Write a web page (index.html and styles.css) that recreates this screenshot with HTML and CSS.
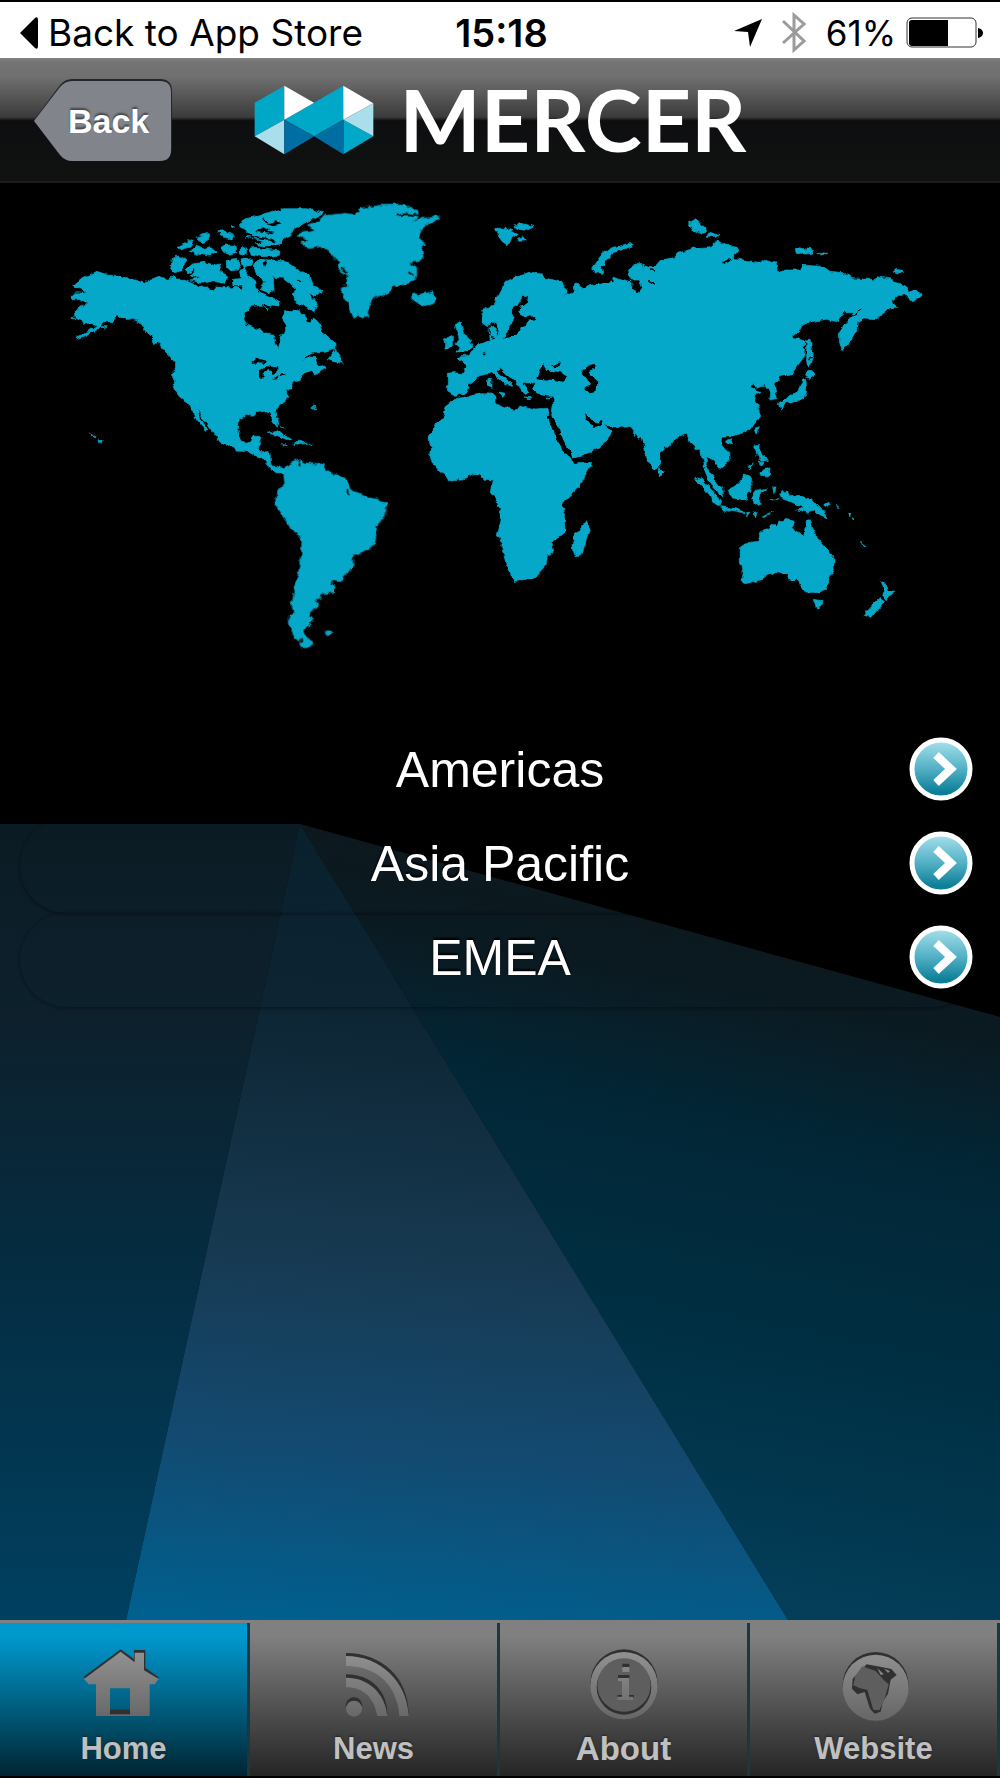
FILE: index.html
```html
<!DOCTYPE html>
<html lang="en">
<head>
<meta charset="utf-8">
<meta name="viewport" content="width=device-width, initial-scale=1">
<title>Mercer</title>
<link rel="stylesheet" href="styles.css">
</head>
<body>
<div class="status">
  <a class="status-back" href="#">
    <svg width="18" height="32" viewBox="0 0 18 32" aria-hidden="true"><path d="M0 16 15 1Q18-1 18 3V29Q18 33 15 31Z"/></svg>
    <span>Back to App Store</span>
  </a>
  <time class="status-time">15:18</time>
  <div class="status-info">
    <svg width="28" height="28" viewBox="0 0 28 28" aria-hidden="true"><path d="M28 0 16 28 14 13 0 12Z"/></svg>
    <svg class="bluetooth" width="24" height="44" viewBox="0 0 24 44" aria-hidden="true"><path d="M1 10 22 30 12 39V4L22 13 1 32"/></svg>
    <span>61%</span>
    <svg class="battery" width="77" height="32" viewBox="0 0 77 32" aria-hidden="true"><rect class="battery-case" x="1" y="1" width="69" height="29" rx="5"/><path d="M6 3H42V29H6Q3 29 3 26V6Q3 3 6 3ZM72 11Q77 12 77 16T72 21Z"/></svg>
  </div>
</div>

<header class="header">
  <button class="back" type="button">
    <svg class="back-shape" viewBox="0 0 138 82" preserveAspectRatio="none" aria-hidden="true">
      <path class="back-shadow" d="M0 41 26 6Q31 0 38 0H126Q138 0 138 12V68Q138 80 126 80H38Q31 80 26 75Z"/>
      <path class="back-face" d="M0 42 26 8Q31 2 38 2H126Q137 2 137 13V71Q137 82 126 82H38Q31 82 26 76Z"/>
    </svg>
    <span>Back</span>
  </button>
  <div class="brand">
    <svg width="120" height="70" viewBox="760 257 360 210" aria-hidden="true">
      <path fill="#00a8c8" d="M762 310 851 259V361L762 411ZM851 361 1028 259V361L940 411ZM1028 361 1118 411 1028 465Z"/>
      <path fill="#fff" d="M851 259 940 310 851 361ZM1028 259 1118 312 1028 361Z"/>
      <path fill="#a8dfeb" d="M762 411 851 361V465ZM1028 361 1118 312V411Z"/>
      <path fill="#006da3" d="M851 361 940 411 851 465ZM940 411 1028 361V465Z"/>
    </svg>
    <span class="wordmark">MERCER</span>
  </div>
</header>

<main class="main">
  <svg class="beams" viewBox="0 183 1000 1437" preserveAspectRatio="none" aria-hidden="true">
    <defs>
      <linearGradient id="beam-left" x1="0" y1="824" x2="0" y2="1620" gradientUnits="userSpaceOnUse">
        <stop offset="0" stop-color="#0b1b24"/><stop offset=".25" stop-color="#0d212d"/><stop offset=".55" stop-color="#052c41"/><stop offset="1" stop-color="#004060"/>
      </linearGradient>
      <linearGradient id="beam-mid" x1="440" y1="824" x2="380" y2="1630" gradientUnits="userSpaceOnUse">
        <stop offset="0" stop-color="#09202d"/><stop offset=".24" stop-color="#0d2533"/><stop offset=".55" stop-color="#173a52"/><stop offset=".78" stop-color="#134a71"/><stop offset="1" stop-color="#00608f"/>
      </linearGradient>
      <linearGradient id="beam-right" x1="700" y1="824" x2="550" y2="1600" gradientUnits="userSpaceOnUse">
        <stop offset="0" stop-color="#0d171c"/><stop offset=".2" stop-color="#0b1a21"/><stop offset=".36" stop-color="#022636"/><stop offset=".65" stop-color="#003044"/><stop offset="1" stop-color="#04405c"/>
      </linearGradient>
    </defs>
    <path fill="url(#beam-left)" d="M0 824H300L126 1620H0Z"/>
    <path fill="url(#beam-right)" d="M300 824 1000 1017V1620H788Z"/>
    <path fill="url(#beam-mid)" d="M300 824 788 1620H126Z"/>
  </svg>

  <svg class="map" viewBox="0 183 1000 542" role="img" aria-label="World map">
    <defs>
      <filter id="coast" x="0" y="183" width="1000" height="542" filterUnits="userSpaceOnUse" color-interpolation-filters="sRGB">
        <feTurbulence type="fractalNoise" baseFrequency=".14" numOctaves="2" seed="4" result="noise"/>
        <feDisplacementMap in="SourceGraphic" in2="noise" scale="6" xChannelSelector="R" yChannelSelector="G"/>
      </filter>
    </defs>
    <g filter="url(#coast)">
    <!-- North America -->
    <g transform="translate(50 190) scale(.3333)">
      <path d="M68 285 95 262 120 256 140 244 175 255 205 257 235 265 260 268 287 277 300 268 330 259 352 268 372 260 378 267 405 268 432 280 440 292 475 291 487 300 495 291 545 293 565 290 575 299 578 285 552 285 550 268 575 265 568 240 582 236 600 262 614 273 616 292 630 310 652 318 690 335 686 348 665 345 655 360 640 345 600 350 588 365 583 382 592 405 620 417 645 432 672 436 674 462 688 476 692 460 690 438 708 425 706 408 697 395 700 362 725 358 760 372 770 396 785 402 790 384 799 390 820 428 858 460 858 478 830 486 790 490 765 500 755 515 785 498 798 500 800 520 815 528 825 525 828 532 795 552 785 545 758 552 750 572 730 576 722 596 712 600 716 622 700 636 682 655 679 668 686 700 682 712 668 694 664 670 640 664 618 668 610 676 590 673 565 688 562 722 572 748 588 760 605 755 613 738 636 740 632 758 628 784 660 786 662 822 690 836 712 828 712 850 684 848 652 826 632 802 612 796 595 782 560 780 510 756 500 742 478 712 450 668 440 658 455 690 475 722 466 724 440 690 420 645 392 626 376 602 370 580 374 520 345 484 330 464 290 425 275 400 250 388 225 388 205 375 190 395 170 392 150 412 110 436 82 447 80 440 112 428 140 405 122 400 102 402 96 390 78 382 76 362 92 350 110 346 108 336 88 328 68 330 63 320 75 308 108 310 95 298 75 292Z"/>
      <path d="M368 200 388 198 408 208 395 240 380 248 362 238ZM382 172 400 160 430 152 420 168 392 177ZM440 140 475 130 476 148 460 158 440 150ZM418 185 440 168 460 176 480 170 500 188 480 198 440 192ZM408 238 428 222 470 216 490 226 512 222 508 240 534 262 518 280 490 272 455 280 420 270 452 262 410 252ZM502 125 515 122 550 138 546 148 520 142ZM545 106 554 112 546 116ZM512 172 530 165 558 166 560 188 535 193 520 186ZM528 215 556 208 570 222 562 240 545 242 530 228ZM570 175 590 178 588 194 572 190ZM568 105 580 88 605 82 640 72 700 56 770 56 822 68 815 76 770 97 728 122 720 140 700 150 692 166 640 168 615 162 642 152 590 142 612 130 585 122ZM598 178 620 175 690 182 688 196 640 200 600 192ZM610 222 628 208 705 212 745 242 778 258 790 290 822 302 800 318 780 312 802 340 792 365 770 350 735 334 730 312 738 296 718 278 702 265 670 262 672 300 655 308 630 298 645 275 618 250ZM570 210 608 206 606 225 580 235ZM640 320 665 330 680 342 640 345ZM832 510 855 480 870 500 880 520ZM652 730 680 724 725 748 720 753 680 736ZM728 760 745 750 770 760 738 766ZM698 760 712 764 700 768ZM776 760 790 764ZM693 710 706 714ZM790 648 798 652 790 655ZM145 745 154 752 150 760ZM118 732 138 740 136 744ZM345 482 365 486 382 512 375 512ZM305 430 312 450 325 455 314 464ZM155 410 172 410 164 418ZM66 382 78 388 68 390Z"/>
      <g class="water">
        <path d="M604 522 622 506 650 516 648 522 625 520ZM630 566 630 540 645 528 682 532 682 545 668 552 658 536 642 545 640 566ZM662 566 690 556 685 564ZM690 550 710 548 692 556ZM796 502 835 496 826 520 802 526ZM675 292 700 286 712 310 698 322 674 312ZM700 288 718 278 728 292 712 298ZM740 268 760 276 744 275ZM780 308 800 322 786 326ZM638 218 650 210 642 235ZM650 100 675 94 698 100 670 106ZM615 126 640 112 660 120 650 130Z"/>
        <path class="strait" d="M600 140 650 145 678 158M640 86 652 100M640 125 668 130M470 222 480 210 520 205M400 262 435 242M645 345 660 352 680 360"/>
      </g>
    </g>
    <!-- Greenland and Iceland -->
    <g transform="translate(270 190) scale(.3333)">
      <path d="M78 138 100 125 132 120 115 105 150 92 165 76 230 70 252 74 280 54 330 46 400 45 445 62 438 80 430 96 452 82 505 78 510 86 480 98 455 120 445 140 468 160 455 172 460 205 445 215 418 216 440 232 440 262 408 282 368 290 345 312 310 324 295 350 292 380 275 384 265 374 252 382 235 345 215 310 218 290 235 288 234 256 205 240 205 215 180 182 150 170 118 175 92 158 120 150Z"/>
      <path d="M425 310 442 308 448 320 465 310 485 306 502 324 490 338 460 348 430 334Z"/>
      <path class="strait water" d="M380 77 412 72 440 76M212 234 232 248M415 246 432 258"/>
    </g>
    <!-- South America -->
    <g transform="translate(240 430) scale(.3333)">
      <path d="M92 116 110 108 130 116 150 100 182 88 195 98 230 104 252 100 255 115 278 132 305 138 322 154 330 178 372 198 406 204 438 222 438 246 410 285 408 320 390 356 342 375 340 405 302 456 270 450 285 470 280 486 244 492 242 508 222 512 236 520 215 545 206 556 218 572 196 594 192 608 200 630 222 642 208 650 182 650 178 632 160 616 148 580 148 558 165 550 156 528 163 480 175 430 184 380 186 322 150 298 138 272 106 220 110 188 134 160 130 125 112 128Z"/>
      <path d="M252 610 260 605 274 608 264 618Z"/>
      <path class="strait water" d="M180 90 178 112M184 628 182 638M322 180 324 192"/>
    </g>
    <!-- Africa -->
    <g transform="translate(240 430) scale(.3333)">
      <path d="M645 -93 670 -98 700 -108 765 -114 765 -82 800 -68 825 -54 840 -72 885 -60 925 -62 926 -40 950 5 972 48 998 100 1055 94 1052 110 1018 170 975 212 966 230 976 262 978 302 936 335 942 365 922 382 918 405 882 445 850 452 822 454 812 430 798 395 788 345 772 315 784 268 772 215 750 190 757 150 730 148 718 134 700 134 680 145 630 150 600 126 568 86 572 52 566 18 580 -8 612 -42 618 -72Z"/>
      <path d="M1040 272 1048 296 1034 350 1024 378 1002 380 996 350 1004 310 1022 300Z"/>
    </g>
    <!-- Europe and the Middle East -->
    <g transform="translate(400 190) scale(.3333)">
      <path d="M142 550 155 548 192 550 200 528 192 515 172 502 205 498 240 462 268 452 264 420 280 400 262 410 248 400 242 362 280 345 300 310 318 275 345 262 390 246 425 252 440 265 480 276 502 296 500 315 480 322 492 338 470 335 455 310 490 320 525 305 522 282 540 284 545 298 560 292 590 280 630 278 640 262 690 278 712 308 728 290 718 270 690 270 686 240 702 222 728 224 730 262 740 275 740 225 760 236 780 212 840 208V735L780 790 776 822 762 842 740 790 727 740 715 745 685 708 640 710 612 702 635 728 620 750 595 775 550 795 518 808 512 785 480 735 455 680 462 620 440 618 420 614 400 596 404 575 400 578 378 582 392 600 380 615 366 605 345 572 318 552 300 535 292 545 325 570 340 590 325 585 310 580 275 548 255 558 232 560 210 582 205 600 185 614 165 616 142 602Z"/>
      <path d="M282 115 320 115 358 130 338 142 326 166 310 155ZM338 108 375 102 402 110 375 124ZM355 145 372 140 380 152 360 154ZM575 238 600 200 630 175 690 160 700 168 640 188 605 230 608 250 590 248ZM165 405 175 398 188 410 195 435 220 470 200 485 165 490 182 475 168 462 180 445ZM135 448 160 438 160 465 138 475ZM296 606 318 610 308 622ZM375 624 396 626 384 629ZM436 624 450 626 440 630ZM778 832 792 848 782 858 774 846Z"/>
      <g class="water">
        <path d="M332 370 340 350 355 345 368 320 385 320 380 335 362 348 358 372 372 382 408 378 412 386 380 394 378 408 362 412 355 432 330 442 308 446 325 430 330 400 345 388ZM278 398 290 398 298 432 285 445 270 440 265 420ZM408 565 418 540 432 522 445 542 478 546 502 564 490 575 460 570 435 568ZM452 530 480 520 475 532ZM545 540 565 525 585 522 582 536 568 545 580 562 592 572 590 605 570 610 556 595 570 582ZM555 670 570 680 585 698 610 692 600 710 580 714 560 690ZM368 582 395 578 400 598 420 616 395 618 385 605ZM230 565 265 552 272 600 292 602 300 612 205 608 212 590ZM440 674 454 678 480 724 492 756 512 784 518 810 488 786 470 744Z"/>
        <path class="strait" d="M248 490H256M630 262 640 275M750 230 742 250"/>
      </g>
      <path d="M270 415 285 408 296 436 286 440 270 436Z"/>
      <path d="M266 565 276 566 276 595 266 590Z"/>
    </g>
    <!-- Asia -->
    <g transform="translate(650 190) scale(.3333)">
      <path d="M-20 222 0 230 25 226 40 234 30 215 75 205 78 192 130 174 180 170 200 150 225 166 262 168 270 182 245 205 300 212 330 218 345 208 378 216 382 245 400 240 450 240 460 225 520 230 540 244 598 250 605 266 660 268 672 276 680 260 720 266 775 292 778 304 795 298 814 312 790 336 770 318 745 316 725 332 738 354 715 358 680 386 640 384 622 395 620 425 600 455 576 482 568 455 568 425 590 395 612 368 580 368 565 396 530 388 478 396 425 438 445 448 465 452 462 500 425 552 392 560 372 585 382 625 360 630 362 608 345 585 320 595 310 580 300 595 330 604 310 620 328 660 326 682 296 722 240 740 218 742 216 760 236 785 238 812 210 836 190 810 170 800 168 830 195 868 215 895 218 920 180 880 160 830 152 778 136 782 108 730 80 740 30 788 28 822 12 842 -10 800 -23 740 -40 700Z"/>
      <path d="M116 100 138 86 152 100 170 118 155 132 130 120ZM168 142 180 124 210 134 200 142ZM436 176 445 172 492 182 490 190 440 194ZM500 186 534 190 515 195ZM732 246 742 238 760 242 745 252ZM470 450 480 448 490 498 478 528 470 520ZM460 558 476 540 498 550 478 566ZM458 570 468 568 470 605 460 630 430 632 400 642 392 660 384 638 415 622 445 600ZM314 715 328 710 322 734ZM230 750 248 746 244 764 232 762ZM26 830 42 848 36 858 26 850ZM314 764 330 764 330 790 345 800 355 818 335 812 320 795ZM330 845 360 830 358 858 328 856Z"/>
      <path class="strait water" d="M218 220 245 205M630 355 620 372 600 380M0 275 15 285M0 240 15 243M485 500 476 510"/>
    </g>
    <!-- South-east Asia and Oceania -->
    <g transform="translate(640 430) scale(.3333)">
      <path d="M165 142 182 146 215 180 245 212 240 228 222 218 195 180ZM190 108 202 122 222 140 232 170 215 164ZM242 230 275 234 312 244 305 250 250 240ZM316 245 330 248 320 254ZM338 250 352 248 345 260ZM370 258 395 245 378 262ZM265 176 290 165 318 132 335 145 330 180 316 212 280 204 268 192ZM342 182 378 174 358 188 360 220 346 226 338 208ZM398 170 408 172 402 192ZM390 208 420 206 400 210ZM422 192 440 186 448 200 478 196 520 212 542 232 562 264 535 252 520 240 500 250 470 242 488 232 450 214 430 208ZM548 228 572 216 575 222 556 232ZM590 222 600 232 592 232ZM626 250 636 248 632 260ZM640 260 648 264 642 266ZM658 336 680 352 672 350ZM325 112 340 98 330 118ZM355 90 372 98 365 108Z"/>
      <path d="M298 354 325 338 352 334 362 310 392 288 408 292 415 275 438 268 464 274 455 294 492 316 500 268 508 266 518 294 530 322 560 355 582 382 582 415 568 445 555 478 535 488 495 486 468 445 456 456 442 435 412 428 382 436 362 450 322 460 306 452 310 430 298 395Z"/>
      <path d="M520 508 546 512 545 525 530 534ZM720 452 735 462 745 480 762 484 740 514 728 500 734 480ZM718 506 732 516 712 540 695 562 675 556 680 545Z"/>
    </g>
    </g>
  </svg>

  <nav aria-label="Regions">
    <ul class="regions">
      <li><a class="region" href="#"><span class="region-name">Americas</span><svg class="go" viewBox="0 0 64 64" aria-hidden="true"><defs><linearGradient id="go-fill" x1="0" y1="0" x2="0" y2="1"><stop offset=".05" stop-color="#9fdde9"/><stop offset=".5" stop-color="#52b0c5"/><stop offset=".9" stop-color="#0b7f97"/></linearGradient></defs><circle cx="32" cy="32" r="29"/><path d="M27 18 42 32 27 46"/></svg></a></li>
      <li><a class="region" href="#"><span class="region-name">Asia Pacific</span><svg class="go" viewBox="0 0 64 64" aria-hidden="true"><circle cx="32" cy="32" r="29"/><path d="M27 18 42 32 27 46"/></svg></a></li>
      <li><a class="region" href="#"><span class="region-name">EMEA</span><svg class="go" viewBox="0 0 64 64" aria-hidden="true"><circle cx="32" cy="32" r="29"/><path d="M27 18 42 32 27 46"/></svg></a></li>
    </ul>
  </nav>
</main>

<nav class="tabs" aria-label="Sections">
  <a class="tab tab-active" href="#" aria-current="page">
    <svg class="icon" viewBox="250 140 240 228" aria-hidden="true">
      <defs><linearGradient id="metal" x1="0" y1="150" x2="0" y2="350" gradientUnits="userSpaceOnUse"><stop offset="0" stop-color="#929292"/><stop offset="1" stop-color="#686868"/></linearGradient></defs>
      <path class="edge" d="M248 230 360 147 400 176V149H434V202L476 232 460 240 360 165 262 240Z"/>
      <path class="edge" d="M328 328H388V346H328Z"/>
      <path class="metal" fill-rule="evenodd" d="M250 236 360 154 402 186V157H430V210L474 236 462 252H447V347H388V264H328V347H286V252H264Z"/>
      <path class="metal" d="M328 342H388V347H328Z"/>
    </svg>
    <span class="tab-label">Home</span>
  </a>
  <a class="tab" href="#">
    <svg class="icon" viewBox="1000 140 240 228" aria-hidden="true">
      <g class="edge"><path d="M1036 158C1140 158 1224 230 1224 340H1196C1190 250 1130 190 1036 190Z"/><path d="M1036 222C1110 222 1160 270 1160 340H1130C1120 285 1090 250 1036 250Z"/><circle cx="1060" cy="316" r="25"/></g>
      <g class="metal"><path d="M1036 167C1140 167 1220 245 1224 347H1196C1190 255 1130 197 1036 197Z"/><path d="M1036 232C1105 232 1154 280 1160 347H1130C1120 292 1090 262 1036 260Z"/><circle cx="1060" cy="325" r="24"/></g>
    </svg>
    <span class="tab-label">News</span>
  </a>
  <a class="tab" href="#">
    <svg class="icon" viewBox="250 140 240 228" aria-hidden="true">
      <circle class="edge" cx="370" cy="248" r="101"/>
      <circle class="metal" cx="370" cy="256" r="101"/>
      <circle class="edge" cx="370" cy="261" r="82"/>
      <circle class="hollow" cx="370" cy="254" r="80"/>
      <path class="edge" d="M365 190H386V202H365ZM352 224H386V234H352ZM350 284H400V293H350Z"/>
      <path class="metal" d="M365 200H386V215H365ZM352 233H385V289H398V299H350V289H364V243H352Z"/>
    </svg>
    <span class="tab-label tab-label-large">About</span>
  </a>
  <a class="tab" href="#">
    <svg class="icon" viewBox="1000 140 240 228" aria-hidden="true">
      <circle class="edge" cx="1125" cy="254" r="99"/>
      <circle class="metal" cx="1125" cy="262" r="99"/>
      <path class="edge" d="M1098 192 1130 198 1172 206 1188 224 1170 238 1162 280 1146 306 1140 334 1122 340 1108 325 1092 275 1070 282 1054 265 1056 235Z"/>
      <path class="hollow" d="M1085 198 1125 212 1150 240 1164 252 1152 295 1136 330 1118 328 1100 268 1078 264 1058 255 1064 226Z"/>
      <path class="metal" d="M1130 204 1150 222 1140 224ZM1150 205 1168 212 1162 218Z"/>
    </svg>
    <span class="tab-label">Website</span>
  </a>
</nav>
</body>
</html>
```
FILE: styles.css
```css
* { box-sizing: border-box; }

body {
  margin: 0;
  min-height: 100vh;
  display: flex;
  flex-direction: column;
  background: #000;
  color: #fff;
  font-family: "Liberation Sans", Arial, sans-serif;
}

a { color: inherit; text-decoration: none; }
svg { display: block; flex: none; }

.status {
  display: grid;
  grid-template-columns: 1fr auto 1fr;
  align-items: center;
  height: 58px;
  padding: 5px 17px 0 20px;
  border-top: 2px solid #000;
  background: #fff;
  color: #000;
  font: 37px/50px Inter, sans-serif;
  white-space: nowrap;
}

.status-back { display: flex; align-items: center; gap: 10px; }
.status-time { font-size: 38px; font-weight: 600; }
.status-info { display: flex; align-items: center; justify-content: flex-end; gap: 10px; font-size: 35px; }

.bluetooth {
  fill: none;
  stroke: #9b9b9b;
  stroke-width: 3;
  margin: 0 10px;
}

.battery-case { fill: none; stroke: #333; }

.header {
  display: grid;
  grid-template-columns: 1fr auto 1fr;
  align-items: center;
  height: 125px;
  padding: 0 34px;
  border-bottom: 2px solid #1b1c1b;
  background: linear-gradient(#838383 0, #747474 3%, #707070 15%, #3b3b3b 48%, #0e0e10 51%, #101211);
}

.back {
  position: relative;
  justify-self: start;
  width: 138px;
  height: 82px;
  padding: 2px 0 0 34px;
  border: 0;
  background: none;
  color: #fff;
  font: bold 34px/40px "Liberation Sans", Arial, sans-serif;
  text-align: left;
  text-shadow: 0 -2px 2px #44454a;
}

.back span { position: relative; }
.back-shape { position: absolute; inset: 0; width: 100%; height: 100%; }
.back-shadow { fill: #25262a; }
.back-face { fill: #82848c; }

.brand { display: flex; align-items: center; gap: 26px; }
.wordmark { padding-bottom: 2px; font: bold 86px/100px Lato, sans-serif; }

.main { position: relative; flex: 1; padding-bottom: 40px; }
.beams { position: absolute; inset: 0; width: 100%; height: 100%; }

.map { position: relative; width: 100%; height: auto; fill: #06a8c9; stroke: #06a8c9; stroke-width: 2; }
.water { fill: #000; stroke: none; }
.strait { fill: none; stroke: #000; stroke-width: 5; }

.regions {
  position: relative;
  margin: 0;
  padding: 0 20px;
  list-style: none;
}

.region {
  display: grid;
  grid-template-columns: 64px 1fr 64px;
  align-items: center;
  height: 94px;
  padding: 0 7px 6px;
  border-radius: 47px;
  box-shadow: 0 1px 3px 1px rgba(0, 0, 0, .3);
  font-size: 50px;
  line-height: 58px;
  text-align: center;
}

.region-name { grid-column: 2; padding-top: 2px; text-shadow: 0 -2px 2px #000; }
.go { width: 64px; height: 64px; fill: none; stroke: #fff; }
.go circle { fill: url(#go-fill); stroke-width: 5; }
.go path { stroke-width: 8; }

.tabs {
  display: grid;
  grid-template-columns: repeat(4, 1fr);
  border-top: 3px solid #808080;
  border-bottom: 2px solid #000;
}

.tab {
  display: flex;
  flex-direction: column;
  align-items: center;
  gap: 8px;
  padding: 24px 0 9px;
  border-right: 3px solid #1d3641;
  background: linear-gradient(#808080 8%, #252525);
}

.tab-active { background: linear-gradient(#0099cf 8%, #002532); }

.tab-label {
  color: #c0c0c0;
  font-size: 31px;
  font-weight: bold;
  line-height: 36px;
  text-shadow: 0 -1px 2px #222;
}

.tab-label-large { font-size: 33px; }

.icon { width: 80px; height: 76px; overflow: visible; }
.edge { fill: #303030; }
.metal { fill: url(#metal); }
.hollow { fill: #5e5e5e; }
```
